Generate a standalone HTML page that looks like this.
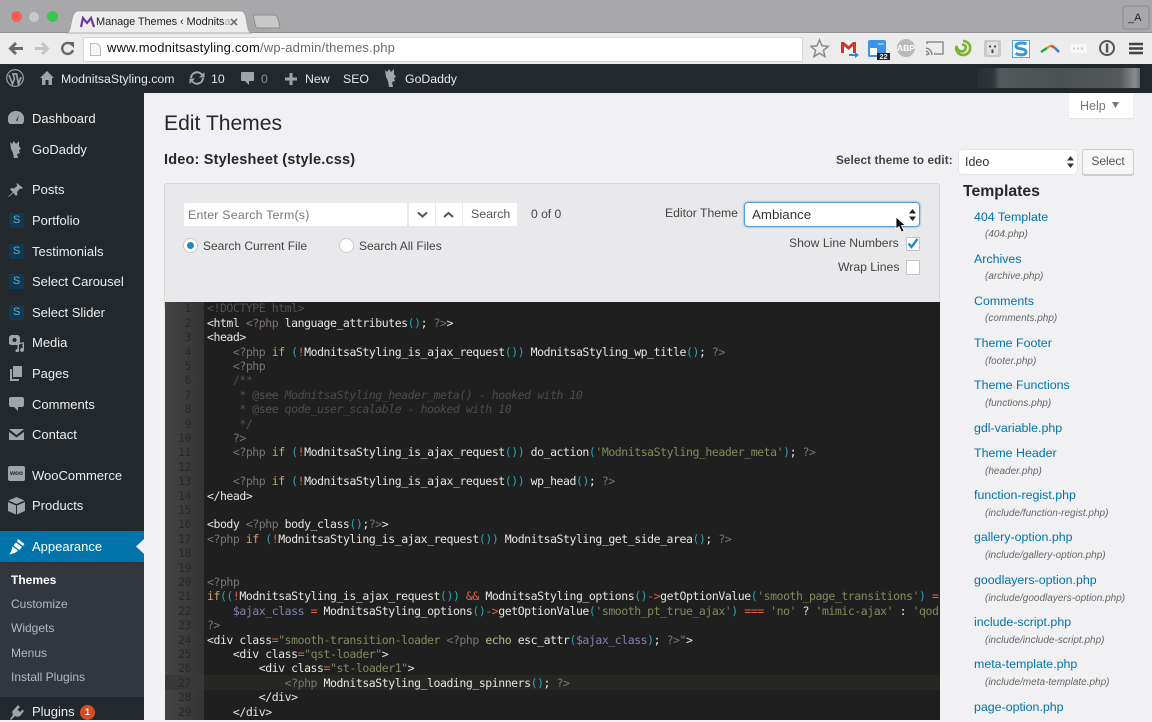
<!DOCTYPE html>
<html><head><meta charset="utf-8"><title>Edit Themes</title>
<style>
html,body{margin:0;padding:0;width:1152px;height:720px;overflow:hidden;background:#f1f1f3;font-family:"Liberation Sans",sans-serif}
.a{position:absolute}
.t{position:absolute;white-space:nowrap;line-height:20px;height:20px}
.m{color:#eee;font-size:13px;left:32px}
.s{color:#b4b9be;font-size:12px;left:11px}
.b{color:#e6e8e9;font-size:12.3px}
.n{color:#0073aa;font-size:12.4px;left:974px}
.f{color:#666;font-size:10px;font-style:italic;left:985px}
.d{color:#444;font-size:12.1px}
#code{position:absolute;left:165px;top:302px;width:775px;height:418px;background:#1f1f1f;overflow:hidden}
#gut{position:absolute;left:0;top:0;width:39px;height:418px;background:linear-gradient(90deg,#444,#343434)}
.l{position:absolute;left:42px;white-space:pre;font:11.5px/14px "DejaVu Sans Mono","Liberation Mono",monospace;letter-spacing:-.452px;color:#e8e6e2;height:14px}
.g{position:absolute;left:0;width:26px;text-align:right;font:11.5px/14px "DejaVu Sans Mono",monospace;letter-spacing:-.4px;color:#282828}
i{font-style:normal}
.p{color:#7b7379}.k{color:#c6a66c}.c{color:#2ba5b5}.r{color:#df6346}.o{color:#7f8c5c}.v{color:#7f82b4}.q{color:#525252}.qi{color:#4c4c4c;font-style:italic}.y{color:#bfb98a}
.ic{position:absolute;fill:#a0a5aa}
.sq{position:absolute;left:9px;width:15px;height:15px;background:#0e3a53;color:#7ea6bc;font:11px/15px 'Liberation Sans';text-align:center}
</style></head><body>

<!-- browser chrome -->
<div class="a" style="left:0;top:0;width:1152px;height:33px;background:#a8a8aa"></div>
<div class="a" style="left:0;top:33px;width:1152px;height:31px;background:#ececec"></div>
<div class="a" style="left:0;top:32px;width:1152px;height:1px;background:#8f8f91"></div>
<div class="a" style="left:11px;top:11px;width:11px;height:11px;border-radius:50%;background:#fc5b57"></div>
<div class="a" style="left:29px;top:12px;width:10px;height:10px;border-radius:50%;background:#c9c9c9"></div>
<div class="a" style="left:47px;top:11px;width:11px;height:11px;border-radius:50%;background:#35c84b"></div>
<svg class="a" style="left:66px;top:10px" width="190" height="24"><path d="M0 23C3 23 4 20 5 14 7 5 8 1 12 1H175C178 1 180 5 181 14 182 20 183 23 186 23Z" fill="#ededed" stroke="#999" stroke-width=".7"/></svg>
<svg class="a" style="left:80px;top:16px" width="15" height="12"><path d="M1 11 3 2 7 7 11 2 14 11" fill="none" stroke="#6b3b97" stroke-width="2.2"/></svg>
<div class="t" style="left:96px;top:12px;font-size:11px;letter-spacing:-.1px;color:#222">Manage Themes ‹ Modnits<span style="color:#aaa">a</span></div>
<svg class="a" style="left:230px;top:18px" width="8" height="8"><path d="M1 1 7 7M7 1 1 7" stroke="#666" stroke-width="1.500"/></svg>
<svg class="a" style="left:252px;top:14px" width="30" height="16"><path d="M1 1H22C24 1 25 2 26 5L28 14H5C4 14 4 13 3 10Z" fill="#c8c8c8" stroke="#8e8e8e"/></svg>
<svg class="a" style="left:1122px;top:5px" width="28" height="25"><rect x="1" y="1" width="26" height="23" rx="3" fill="none" stroke="#8d8d8f"/></svg>
<div class="t" style="left:1128px;top:8px;font-size:11px;color:#222">_A</div>

<svg class="a" style="left:8px;top:40px" width="70" height="17">
<path d="M15 8.500H3M8 3 2.500 8.500 8 14" fill="none" stroke="#6a6a6a" stroke-width="3"/>
<path d="M27 8.500H39M34 3 39.500 8.500 34 14" fill="none" stroke="#c4c4c4" stroke-width="3"/>
<path d="M64 5A5.500 5.500 0 1 0 65 10" fill="none" stroke="#666" stroke-width="2.400"/><path d="M60 2H66V8Z" fill="#666"/></svg>
<div class="a" style="left:83px;top:37px;width:718px;height:23px;background:#fff;border:1px solid #d6d6d6;border-radius:2px"></div>
<svg class="a" style="left:90px;top:43px" width="11" height="13"><path d="M.5.5H7L10.500 4V12.500H.5Z" fill="#f5f5f5" stroke="#bbb"/></svg>
<div class="t" style="left:107px;top:38px;font-size:13px;letter-spacing:.18px;color:#111">www.modnitsastyling.com<span style="color:#6a6a6a">/wp-admin/themes.php</span></div>

<!-- extension icons -->
<svg class="a" style="left:810px;top:38px" width="330" height="22">
<path d="M9.500 2 12 7.800 18.200 8.300 13.400 12.400 15 18.500 9.500 15.200 4 18.500 5.600 12.400 .8 8.300 7 7.800Z" fill="none" stroke="#8a8a8a" stroke-width="1.500"/>
<rect x="31" y="4" width="15" height="11" fill="#fff"/><path d="M31 4V15H34V8L38.500 12 43 8V15H46V4H43L38.500 8 34 4Z" fill="#d8332a"/><path d="M39 16H45V14L49 17 45 20V18H39Z" fill="#3a85d0"/>
<rect x="58" y="2" width="18" height="17" rx="2" fill="#3c94e8"/><rect x="60" y="10" width="7" height="7" fill="#fff"/><rect x="68" y="5" width="6" height="2" fill="#8fc4f4"/>
<rect x="67" y="15" width="13" height="8" fill="#222"/>
<circle cx="96" cy="10" r="9" fill="#b9b9b9"/>
<path d="M117 6V4H133V16H124" fill="none" stroke="#777" stroke-width="1.200"/><path d="M116 10A7 7 0 0 1 122 17M116 13A4 4 0 0 1 119 17" fill="none" stroke="#777" stroke-width="1.200"/><circle cx="117" cy="16.500" r="1" fill="#777"/>
<path d="M153 3A7 7 0 1 1 146.500 8C147 13 152 15 155 12 157 9 155 6 152 7" fill="none" stroke="#7cb32a" stroke-width="2.600"/>
<rect x="174" y="2" width="17" height="17" rx="2" fill="#c9c9c9"/><rect x="177" y="4" width="11" height="13" rx="2" fill="#e2e2e2"/><circle cx="180" cy="8.500" r="1.100" fill="#444"/><circle cx="185" cy="8.500" r="1.100" fill="#444"/><rect x="181.500" y="11.500" width="2" height="3.500" fill="#444"/>
<rect x="202.500" y="2.500" width="17" height="17" fill="#fff" stroke="#5ba4d8"/><path d="M216.500 6C213 4.500 206 4.500 206 8 206 12 216 9.500 216 14 216 17.500 210 17.500 205.500 15.500" fill="none" stroke="#3f97d4" stroke-width="3"/>
<path d="M231 14 237 10" stroke="#2f9e44" stroke-width="2.500"/><path d="M237 10 241 7.500" stroke="#e8a020" stroke-width="2.500"/><path d="M241 7.500 245 10" stroke="#d84a30" stroke-width="2.500"/><path d="M245 10 249 14" stroke="#3b78c8" stroke-width="2.500"/>
<rect x="261" y="6" width="16" height="9" fill="#f7f7f7"/><path d="M263 10.500H275" stroke="#ccc" stroke-width="2" stroke-dasharray="2 2"/>
<circle cx="297" cy="10" r="7" fill="none" stroke="#555" stroke-width="2"/><rect x="295.800" y="5.500" width="2.500" height="9" fill="#555"/>
</svg>
<div class="t" style="left:896px;top:38px;width:20px;text-align:center;font-size:8.500px;font-weight:bold;color:#fff">ABP</div>
<div class="t" style="left:877px;top:47px;width:13px;text-align:center;font-size:7.500px;font-weight:bold;color:#eee">22</div>
<svg class="a" style="left:1129px;top:42px" width="14" height="13"><path d="M0 2H14M0 6.500H14M0 11H14" stroke="#444" stroke-width="2.400"/></svg>

<!-- admin bar -->
<div class="a" style="left:0;top:64px;width:1152px;height:29px;background:#23282d"></div>
<div class="a" style="left:977px;top:68px;width:163px;height:20px;background:linear-gradient(90deg,#2a2e31 0%,#30363a 10%,#54595b 14%,#4b5052 50%,#55595b 88%,#8a8d8e 97%,#6a6d6e 100%)"></div>
<svg class="a" style="left:6px;top:69px" width="18" height="18"><circle cx="9" cy="9" r="8.300" fill="none" stroke="#a0a5aa" stroke-width="1.200"/><path d="M3 6 6.500 15 8.500 9.500 7 5H10.500L12.500 15 15 8" fill="none" stroke="#a0a5aa" stroke-width="1.700"/></svg>
<svg class="a" style="left:40px;top:71px" width="14" height="14"><path d="M7 0 14 7H12V14H8.500V9H5.500V14H2V7H0Z" fill="#a0a5aa"/></svg>
<div class="t b" style="left:61px;top:69px">ModnitsaStyling.com</div>
<svg class="a" style="left:189px;top:71px" width="16" height="14"><path d="M2 7A6 6 0 0 1 13 4M14 7A6 6 0 0 1 3 10" fill="none" stroke="#a0a5aa" stroke-width="2"/><path d="M15.500 1V6.500H10ZM.5 13V7.500H6Z" fill="#a0a5aa"/></svg>
<div class="t b" style="left:211px;top:69px">10</div>
<svg class="a" style="left:241px;top:72px" width="13" height="14"><path d="M1 0H12C12.600 0 13 .4 13 1V8C13 8.600 12.600 9 12 9H8V13L4 9H1C.4 9 0 8.600 0 8V1C0 .4 .4 0 1 0Z" fill="#a0a5aa"/></svg>
<div class="t b" style="left:261px;top:69px;color:#8b9094">0</div>
<svg class="a" style="left:285px;top:73px" width="12" height="12"><path d="M6 0V12M0 6H12" stroke="#a0a5aa" stroke-width="3"/></svg>
<div class="t b" style="left:305px;top:69px">New</div>
<div class="t b" style="left:343px;top:69px">SEO</div>
<svg class="a" style="left:384px;top:68px" width="13" height="20"><path d="M1 2 3 4 5 1 7 4 10 1 10 6 12 9 10 10 11 13 8 14 9 19H5L4 13 2 9Z" fill="#a0a5aa"/></svg>
<div class="t b" style="left:405px;top:69px">GoDaddy</div>

<!-- sidebar -->
<div class="a" style="left:0;top:93px;width:144px;height:627px;background:#23282d"></div>
<div class="a" style="left:0;top:531px;width:144px;height:31px;background:#0073aa"></div>
<div class="a" style="left:0;top:562px;width:144px;height:135px;background:#32373f"></div>
<svg class="a" style="left:136px;top:539px" width="8" height="15"><path d="M8 0V15L0 7.500Z" fill="#f1f1f3"/></svg>

<svg class="ic" style="left:8px;top:111px" width="16" height="14"><path d="M8 0A8 8 0 0 0 1.500 13H14.500A8 8 0 0 0 8 0ZM8 9.500 11 4 9.300 10.300Z" fill-rule="evenodd"/></svg>
<svg class="ic" style="left:9px;top:140px" width="13" height="19"><path d="M1 2 3 4 5 1 7 4 10 1 10 6 12 9 10 10 11 13 8 14 9 18H5L4 13 2 9Z"/></svg>
<svg class="ic" style="left:8px;top:182px" width="16" height="16"><path d="M9 1 15 6 13.500 7 12 6.500 9 10 9.500 12.500 8 14 5.300 10.800 1 15 .5 15 .5 14.500 4.800 10 2 7.500 3.500 6 6 6.500 9.300 3.700 8.500 2Z"/></svg>
<div class="sq" style="top:213px">S</div>
<div class="sq" style="top:244px">S</div>
<div class="sq" style="top:274px">S</div>
<div class="sq" style="top:305px">S</div>
<svg class="ic" style="left:8px;top:335px" width="17" height="17"><path d="M3 0H10L12 2V9L10 10H3L1 9V2Z"/><circle cx="6.500" cy="5" r="2" fill="#23282d"/><path d="M16 7V15A2 2 0 1 1 14.500 13V8.500L11 9.500V15.500A1.800 1.800 0 1 1 9.500 14V8.500Z"/></svg>
<svg class="ic" style="left:10px;top:366px" width="13" height="15"><path d="M3 0H12V11H3Z"/><path d="M0 3H2V13H9V15H0Z"/></svg>
<svg class="ic" style="left:9px;top:397px" width="15" height="14"><path d="M2 0H13C14 0 15 1 15 2V8C15 9 14 10 13 10H9V14L5 10H2C1 10 0 9 0 8V2C0 1 1 0 2 0Z"/></svg>
<svg class="ic" style="left:9px;top:429px" width="15" height="11"><path d="M0 0H15L7.500 6ZM0 3 7.500 8.500 15 3V11H0Z"/></svg>
<div class="a" style="left:8px;top:466px;width:17px;height:15px;background:#a0a5aa;border-radius:2px;color:#23282d;font:bold 6.500px/15px 'Liberation Sans';text-align:center">woo</div>
<svg class="ic" style="left:8px;top:497px" width="17" height="18"><path d="M8.500 0 16.500 3.500 8.500 7 .5 3.500ZM0 5 8 8.500V17.500L0 14ZM17 5V14L9 17.500V8.500Z"/></svg>
<svg class="a" style="left:8px;top:539px" width="17" height="16"><path d="M10 0 16.500 5 15 7 9 2.500ZM8 3.500 14 8 11.500 11 5.500 6.500ZM4.500 7.500 10 11.500C8 14 4 15 1 15.500 3 13.500 3.500 11 4.500 7.500Z" fill="#fff"/></svg>
<svg class="ic" style="left:9px;top:704px" width="15" height="16"><path d="M9 1 11 3 8.500 5.500 11 8 13.500 5.500 15 7 11.500 11.500C10 13 8 13 6 12L2 16 1 15 4 11C3 9 3 7 4.500 6Z"/></svg>

<div class="t m" style="top:109px">Dashboard</div>
<div class="t m" style="top:140px">GoDaddy</div>
<div class="t m" style="top:180px">Posts</div>
<div class="t m" style="top:211px">Portfolio</div>
<div class="t m" style="top:242px">Testimonials</div>
<div class="t m" style="top:272px">Select Carousel</div>
<div class="t m" style="top:303px">Select Slider</div>
<div class="t m" style="top:333px">Media</div>
<div class="t m" style="top:364px">Pages</div>
<div class="t m" style="top:395px">Comments</div>
<div class="t m" style="top:425px">Contact</div>
<div class="t m" style="top:466px">WooCommerce</div>
<div class="t m" style="top:496px">Products</div>
<div class="t m" style="top:537px;color:#fff">Appearance</div>
<div class="t s" style="top:570px;color:#fff;font-weight:bold">Themes</div>
<div class="t s" style="top:594px">Customize</div>
<div class="t s" style="top:618px">Widgets</div>
<div class="t s" style="top:643px">Menus</div>
<div class="t s" style="top:667px">Install Plugins</div>
<div class="t m" style="top:702px">Plugins</div>
<div class="a" style="left:80px;top:705px;width:15px;height:15px;border-radius:50%;background:#d54e21;color:#fff;font:bold 9px/15px 'Liberation Sans';text-align:center">1</div>

<!-- main -->
<div class="a" style="left:1069px;top:93px;width:64px;height:25px;background:#fff;box-shadow:0 1px 1px rgba(0,0,0,.08)"></div>
<div class="t" style="left:1080px;top:96px;font-size:12.500px;color:#72777c">Help</div>
<svg class="a" style="left:1112px;top:102px" width="7" height="6"><path d="M0 0H7L3.500 6Z" fill="#72777c"/></svg>
<div class="t" style="left:164px;top:114px;font-size:21.100px;color:#23282d">Edit Themes</div>
<div class="t" style="left:164px;top:150px;font-size:14.500px;font-weight:bold;letter-spacing:.18px;color:#23282d">Ideo: Stylesheet (style.css)</div>
<div class="t" style="left:836px;top:151px;font-size:11.700px;font-weight:bold;color:#444;letter-spacing:.12px">Select theme to edit:</div>
<div class="a" style="left:959px;top:150px;width:118px;height:24px;background:#fff;border-radius:4px;box-shadow:0 0 0 1px #e6e6e6"></div>
<div class="t" style="left:965px;top:152px;font-size:12.500px;color:#333">Ideo</div>
<svg class="a" style="left:1067px;top:156px" width="7" height="12"><path d="M3.500 0 7 4.500H0ZM3.500 12 0 7.500H7Z" fill="#333"/></svg>
<div class="a" style="left:1082px;top:149px;width:50px;height:24px;background:#f7f7f7;border:1px solid #ccc;border-radius:3px;box-shadow:0 1px 0 #ccc"></div>
<div class="t" style="left:1082px;top:151px;width:52px;text-align:center;font-size:12px;color:#555">Select</div>

<div class="a" style="left:164px;top:183px;width:774px;height:125px;background:#e9e9eb;border:1px solid #d8d8d8;border-radius:3px"></div>
<div class="a" style="left:184px;top:203px;width:223px;height:23px;background:#fff"></div>
<div class="t" style="left:188px;top:205px;font-size:12.400px;letter-spacing:.2px;color:#777">Enter Search Term(s)</div>
<div class="a" style="left:409px;top:203px;width:26px;height:23px;background:#fff"></div>
<div class="a" style="left:436px;top:203px;width:26px;height:23px;background:#fff"></div>
<div class="a" style="left:463px;top:203px;width:54px;height:23px;background:#fff"></div>
<svg class="a" style="left:417px;top:211px" width="40" height="8"><path d="M1 1.500 5.500 5.500 10 1.500M27 6 31.500 2 36 6" fill="none" stroke="#555" stroke-width="2"/></svg>
<div class="t" style="left:471px;top:204px;font-size:12.400px;color:#555">Search</div>
<div class="t d" style="left:531px;top:204px">0 of 0</div>
<div class="a" style="left:183px;top:238px;width:13px;height:13px;border-radius:50%;background:#fff;border:1px solid #ccc"></div>
<div class="a" style="left:187px;top:242px;width:7px;height:7px;border-radius:50%;background:#1e8cbe"></div>
<div class="t d" style="left:203px;top:236px;font-size:12px">Search Current File</div>
<div class="a" style="left:339px;top:238px;width:13px;height:13px;border-radius:50%;background:#fff;border:1px solid #ccc"></div>
<div class="t d" style="left:359px;top:236px;font-size:12px">Search All Files</div>
<div class="t d" style="left:665px;top:203px;font-size:12.200px">Editor Theme</div>
<div class="a" style="left:744px;top:202px;width:174px;height:23px;background:#fff;border:1px solid #5b9dd9;border-radius:4px;box-shadow:0 0 2px rgba(30,140,190,.8)"></div>
<div class="t" style="left:752px;top:205px;font-size:13.300px;color:#333">Ambiance</div>
<svg class="a" style="left:909px;top:209px" width="7" height="12"><path d="M3.500 0 7 4.500H0ZM3.500 12 0 7.500H7Z" fill="#222"/></svg>
<div class="t d" style="left:789px;top:233px;font-size:12.200px">Show Line Numbers</div>
<div class="a" style="left:906px;top:237px;width:12px;height:12px;background:#fff;border:1px solid #c4c4c4"></div>
<svg class="a" style="left:906px;top:237px" width="14" height="13"><path d="M2.500 6.500 5.500 10 11.500 2" fill="none" stroke="#1e8cbe" stroke-width="2.300"/></svg>
<div class="t d" style="left:838px;top:257px;font-size:12.200px">Wrap Lines</div>
<div class="a" style="left:906px;top:260px;width:12px;height:13px;background:#fff;border:1px solid #c4c4c4"></div>

<div class="t" style="left:963px;top:182px;font-size:15.800px;font-weight:bold;color:#23282d">Templates</div>
<div class="t n" style="top:207px">404 Template</div><div class="t f" style="top:225px">(404.php)</div>
<div class="t n" style="top:249px">Archives</div><div class="t f" style="top:267px">(archive.php)</div>
<div class="t n" style="top:291px">Comments</div><div class="t f" style="top:309px">(comments.php)</div>
<div class="t n" style="top:333px">Theme Footer</div><div class="t f" style="top:352px">(footer.php)</div>
<div class="t n" style="top:375px">Theme Functions</div><div class="t f" style="top:394px">(functions.php)</div>
<div class="t n" style="top:418px">gdl-variable.php</div>
<div class="t n" style="top:443px">Theme Header</div><div class="t f" style="top:462px">(header.php)</div>
<div class="t n" style="top:485px">function-regist.php</div><div class="t f" style="top:504px">(include/function-regist.php)</div>
<div class="t n" style="top:527px">gallery-option.php</div><div class="t f" style="top:546px">(include/gallery-option.php)</div>
<div class="t n" style="top:570px">goodlayers-option.php</div><div class="t f" style="top:589px">(include/goodlayers-option.php)</div>
<div class="t n" style="top:612px">include-script.php</div><div class="t f" style="top:631px">(include/include-script.php)</div>
<div class="t n" style="top:654px">meta-template.php</div><div class="t f" style="top:673px">(include/meta-template.php)</div>
<div class="t n" style="top:697px">page-option.php</div>

<!-- code editor -->
<div id="code">
<div id="gut"></div>
<div class="a" style="left:39px;top:373px;width:736px;height:15px;background:#262622"></div>
<div class="a" style="left:0;top:373px;width:39px;height:15px;background:#383838"></div>
<div class="g" style="top:-1px">1</div><div class="g" style="top:14px">2</div><div class="g" style="top:28px">3</div><div class="g" style="top:43px">4</div><div class="g" style="top:57px">5</div><div class="g" style="top:71px">6</div><div class="g" style="top:86px">7</div><div class="g" style="top:100px">8</div><div class="g" style="top:115px">9</div><div class="g" style="top:129px">10</div><div class="g" style="top:143px">11</div><div class="g" style="top:158px">12</div><div class="g" style="top:172px">13</div><div class="g" style="top:187px">14</div><div class="g" style="top:201px">15</div><div class="g" style="top:215px">16</div><div class="g" style="top:230px">17</div><div class="g" style="top:244px">18</div><div class="g" style="top:259px">19</div><div class="g" style="top:273px">20</div><div class="g" style="top:287px">21</div><div class="g" style="top:302px">22</div><div class="g" style="top:316px">23</div><div class="g" style="top:331px">24</div><div class="g" style="top:345px">25</div><div class="g" style="top:359px">26</div><div class="g" style="top:374px">27</div><div class="g" style="top:388px">28</div><div class="g" style="top:403px">29</div>

<div class="l q" style="top:-1px">&lt;!DOCTYPE html&gt;</div>
<div class="l" style="top:14px">&lt;html <i class="p">&lt;?php</i> language_attributes<i class="c">()</i>; <i class="p">?&gt;</i>&gt;</div>
<div class="l" style="top:28px">&lt;head&gt;</div>
<div class="l" style="top:43px">    <i class="p">&lt;?php</i> <i class="k">if</i> <i class="c">(</i><i class="r">!</i>ModnitsaStyling_is_ajax_request<i class="c">())</i> ModnitsaStyling_wp_title<i class="c">()</i>; <i class="p">?&gt;</i></div>
<div class="l" style="top:57px">    <i class="p">&lt;?php</i></div>
<div class="l q" style="top:71px">    /**</div>
<div class="l q" style="top:86px">     * @see <i class="qi">ModnitsaStyling_header_meta() - hooked with 10</i></div>
<div class="l q" style="top:100px">     * @see <i class="qi">qode_user_scalable - hooked with 10</i></div>
<div class="l q" style="top:115px">     */</div>
<div class="l p" style="top:129px">    ?&gt;</div>
<div class="l" style="top:143px">    <i class="p">&lt;?php</i> <i class="k">if</i> <i class="c">(</i><i class="r">!</i>ModnitsaStyling_is_ajax_request<i class="c">())</i> do_action<i class="c">(</i><i class="o">'ModnitsaStyling_header_meta'</i><i class="c">)</i>; <i class="p">?&gt;</i></div>
<div class="l" style="top:172px">    <i class="p">&lt;?php</i> <i class="k">if</i> <i class="c">(</i><i class="r">!</i>ModnitsaStyling_is_ajax_request<i class="c">())</i> wp_head<i class="c">()</i>; <i class="p">?&gt;</i></div>
<div class="l" style="top:187px">&lt;/head&gt;</div>
<div class="l" style="top:215px">&lt;body <i class="p">&lt;?php</i> body_class<i class="c">()</i>;<i class="p">?&gt;</i>&gt;</div>
<div class="l" style="top:230px"><i class="p">&lt;?php</i> <i class="k">if</i> <i class="c">(</i><i class="r">!</i>ModnitsaStyling_is_ajax_request<i class="c">())</i> ModnitsaStyling_get_side_area<i class="c">()</i>; <i class="p">?&gt;</i></div>
<div class="l p" style="top:273px">&lt;?php</div>
<div class="l" style="top:287px"><i class="k">if</i><i class="c">((</i><i class="r">!</i>ModnitsaStyling_is_ajax_request<i class="c">())</i> <i class="r">&amp;&amp;</i> ModnitsaStyling_options<i class="c">()</i><i class="r">-&gt;</i>getOptionValue<i class="c">(</i><i class="o">'smooth_page_transitions'</i><i class="c">)</i> <i class="r">=</i></div>
<div class="l" style="top:302px">    <i class="v">$ajax_class</i> <i class="r">=</i> ModnitsaStyling_options<i class="c">()</i><i class="r">-&gt;</i>getOptionValue<i class="c">(</i><i class="o">'smooth_pt_true_ajax'</i><i class="c">)</i> <i class="r">===</i> <i class="o">'no'</i> ? <i class="o">'mimic-ajax'</i> : <i class="o">'qod</i></div>
<div class="l p" style="top:316px">?&gt;</div>
<div class="l" style="top:331px">&lt;div class<i class="r">=</i><i class="o">"smooth-transition-loader</i> <i class="p">&lt;?php</i> <i class="y">echo</i> esc_attr<i class="c">(</i><i class="v">$ajax_class</i><i class="c">)</i>; <i class="p">?&gt;</i><i class="o">"</i>&gt;</div>
<div class="l" style="top:345px">    &lt;div class<i class="r">=</i><i class="o">"qst-loader"</i>&gt;</div>
<div class="l" style="top:359px">        &lt;div class<i class="r">=</i><i class="o">"st-loader1"</i>&gt;</div>
<div class="l" style="top:374px">            <i class="p">&lt;?php</i> ModnitsaStyling_loading_spinners<i class="c">()</i>; <i class="p">?&gt;</i></div>
<div class="l" style="top:388px">        &lt;/div&gt;</div>
<div class="l" style="top:403px">    &lt;/div&gt;</div>
</div>

<!-- cursor -->
<svg class="a" style="left:895px;top:216px" width="12" height="18"><path d="M1 1V13L4 10.500 6.500 16 9 15 6.500 9.500H10.500Z" fill="#111" stroke="#fff" stroke-width=".8"/></svg>
</body></html>
